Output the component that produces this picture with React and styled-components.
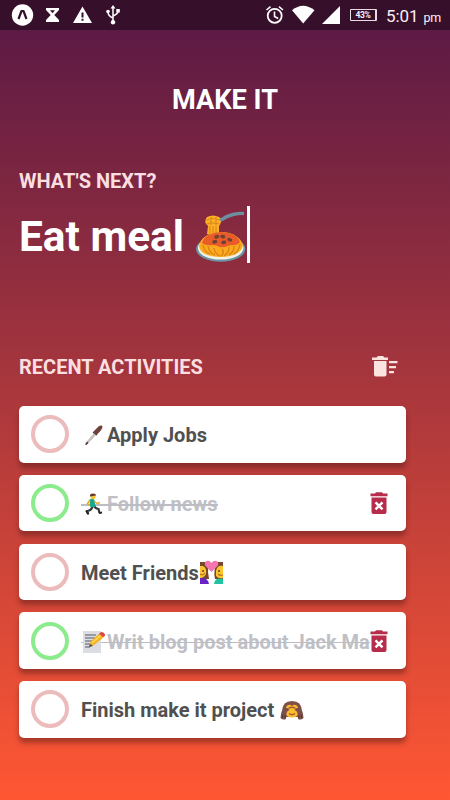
import React from "react";
import styled, { createGlobalStyle } from "styled-components";

const GlobalStyle = createGlobalStyle`
  * { box-sizing: border-box; }
  body { margin: 0; font-family: Roboto, "Liberation Sans", sans-serif; }
`;

const Screen = styled.div`
  width: 450px;
  height: 800px;
  overflow: hidden;
  display: flex;
  flex-direction: column;
  background: linear-gradient(180deg, #571845 0%, #ff5733 100%);
`;

const StatusBar = styled.header`
  display: flex;
  justify-content: space-between;
  height: 30px;
  flex: none;
  background: #360f2a;
`;

const StatusIcons = styled.svg`
  display: block;
  flex: none;
  height: 30px;
  width: ${(p) => p.$width}px;
`;

const StatusRight = styled.div`
  display: flex;
  align-items: center;
  width: 186px;
  color: #fbeff6;
`;

const Battery = styled.div`
  display: flex;
  flex: none;
  align-items: center;
  justify-content: center;
  width: 27px;
  height: 12px;
  margin-left: 10px;
  border: 1px solid #e9dce5;
  border-right-width: 2px;
  border-radius: 1px;
  font-size: 8.5px;
  font-weight: 700;
  line-height: 10px;
  letter-spacing: -0.3px;
`;

const Clock = styled.time`
  display: flex;
  align-items: baseline;
  gap: 5px;
  margin-left: 9px;
  padding-top: 3px;
  font-size: 17px;
  line-height: 20px;
  letter-spacing: -0.1px;
  white-space: nowrap;
`;

const Meridiem = styled.span`
  font-size: 12.5px;
`;

const Main = styled.main`
  display: flex;
  flex-direction: column;
  padding: 54px 44px 0 19px;
`;

const Title = styled.h1`
  margin: 0 -44px 0 -19px;
  text-align: center;
  color: #fff;
  font-size: 27.2px;
  line-height: 32px;
  font-weight: 700;
`;

const Label = styled.h2`
  margin: 0;
  color: #fbdfe0;
  font-size: 20px;
  line-height: 24px;
  font-weight: 700;
`;

const NextSection = styled.section`
  margin-top: 53px;
  height: 186px;
`;

const Entry = styled.div`
  display: flex;
  align-items: center;
  height: 57px;
  margin-top: 13px;
  color: #fff;
  font-size: 42.4px;
  line-height: 57px;
  font-weight: 700;
  white-space: nowrap;
`;

const EntryText = styled.span`
  width: 176px;
  padding-top: 4px;
`;

const Caret = styled.span`
  width: 3px;
  height: 57px;
  margin-left: -1px;
  background: #fff;
`;

const SectionHeader = styled.div`
  display: flex;
  align-items: center;
  justify-content: space-between;
  height: 24px;
  padding-right: 8px;
`;

const List = styled.ul`
  display: flex;
  flex-direction: column;
  gap: 12.3px;
  list-style: none;
  margin: 27px 0 0;
  padding: 0;
`;

const Card = styled.li`
  display: flex;
  align-items: center;
  height: 56.5px;
  padding: 0 16px 0 12px;
  background: #fff;
  border-radius: 5px;
  box-shadow: 0 5px 5px rgba(80, 25, 25, 0.45);
`;

const Ring = styled.span`
  flex: none;
  width: 38px;
  height: 38px;
  border: 4px solid ${(p) => (p.$done ? "#8ceb8c" : "#ecbbbc")};
  border-radius: 50%;
`;

const TaskText = styled.div`
  position: relative;
  display: flex;
  align-items: center;
  height: 28px;
  margin-left: 12px;
  color: ${(p) => (p.$done ? "#bfc0c6" : "#505050")};
  font-size: 20px;
  line-height: 28px;
  font-weight: 700;
  white-space: nowrap;
  padding-top: 2px;

  &::before {
    content: "";
    display: ${(p) => (p.$done ? "block" : "none")};
    position: absolute;
    left: 0;
    right: 0;
    top: 15px;
    height: 1.5px;
    background: #bcbdc3;
  }
`;

const Emoji = styled.svg`
  display: block;
  position: relative;
  flex: none;
  overflow: visible;
  width: ${(p) => p.$size}px;
  height: ${(p) => p.$size}px;
  margin-left: ${(p) => p.$before || 0}px;
`;

const RemoveButton = styled.button`
  display: flex;
  flex: none;
  margin: 0 0 0 auto;
  padding: 0;
  border: 0;
  background: none;
`;

const ClearButton = styled(RemoveButton)`
  margin: 0;
`;

const Glyph = styled.svg`
  display: block;
  width: ${(p) => p.$w}px;
  height: ${(p) => p.$h}px;
`;

const Spaghetti = () => (
  <Emoji $size={53} viewBox="0 0 53 53">
    <ellipse cx="25.7" cy="41" rx="24.7" ry="12.8" fill="#6b94a4" />
    <ellipse cx="25.7" cy="40" rx="22.8" ry="11.6" fill="#f3f0e6" />
    <path d="M4 38C5 30 14 24 26 24s20 6 22 13c-1 8-11 12-22 12S5 46 4 38Z" fill="#fbaa1e" />
    <path d="M8 37q1 7 7 9M13 38q1 7 7 9M19 40q1 6 6 8M27 41q3 4-1 7M34 39q0 6-5 9M39 38q0 6-5 9M45 36q-1 7-6 10" fill="none" stroke="#d98016" strokeWidth="1.3" />
    <path d="M12 9q6-3 12 0 3 2 2 5-1 3-2 4v8H12l1-8q-5-4-1-9Z" fill="#fbb026" />
    <path d="M12 12q6-3 12 0M12 16q6-2 12 0M15 18v8M18 18v8M21 18v8M16 9v8M21 9v8" fill="none" stroke="#dc8619" strokeWidth="1.1" />
    <path d="M7 35Q9 28 15 26.500 20 24 26 24q16 1 19 10-2 3-6 3-4 0-6 1-4 2-8 1-4-2-7-2-7 1-11-2Z" fill="#e95b28" />
    <path d="m21 29 1.500-.4M27 28.500l1.500.2M34 31.500l1.500.5M19 34l1.500-.4M28 34.500l1.500-.2" fill="none" stroke="#704035" strokeWidth="3.4" strokeLinecap="round" />
    <path d="M25 12.500Q31 8 38 6.500T49 5.500" fill="none" stroke="#6e8f9f" strokeWidth="3.4" />
  </Emoji>
);

const Knife = () => (
  <Emoji $size={26} viewBox="0 0 26 26">
    <path d="m4.500 21 9-10.500 2 2-9 9.500Z" fill="#c9bfbc" />
    <path d="m4 22.500 2-3 1.500 1.500-2 2Z" fill="#51413e" />
    <path d="m12.500 9.500 5-5q3-2 4 0 0 3-5.500 8Z" fill="#704139" />
    <path d="m12 10 4 3" stroke="#4d302e" strokeWidth="1.3" />
  </Emoji>
);

const Runner = () => (
  <Emoji $size={26} viewBox="0 0 26 26">
    <path d="M11.500 14q0 5-5 6l.5 3M12.500 14q2 4 5 4l1 4" fill="none" stroke="#35383c" strokeWidth="2.2" />
    <path d="m5 19.500 2.500 4m10.500-1.300 3-.7" stroke="#202226" strokeWidth="1.8" />
    <path d="M8.500 8.500q3-1.500 5 .5l1 6.500q-3 1-5.500 0Z" fill="#18a98d" />
    <path d="m9 9-2.500 3.500 2 2m5-4 2.500 2 3-1" fill="none" stroke="#e5ad27" strokeWidth="1.5" />
    <circle cx="12" cy="5.800" r="2.500" fill="#f6c52e" />
    <path d="M9 5.500Q8.500 2.500 12 2.500q3 0 3 2-3 .5-6 1Z" fill="#67372d" />
  </Emoji>
);

const Couple = () => (
  <Emoji $size={25} viewBox="0 0 25 25">
    <path d="M1 2h6q3 4 2 10l1 7H1ZM18 2h6v17h-8q-2-9 2-17Z" fill="#75472f" />
    <path d="M1 6h3q4 2 3 8-2 4-6 4ZM24 6q-6-1-7 5v5q3 3 7 2Z" fill="#fdc52d" />
    <path d="M1 18q8-1 9 6H1Z" fill="#6922c5" />
    <path d="M15 24q1-7 9-5v5Z" fill="#20c4a0" />
    <path d="m12.500 12-6-6q-2-4 1-5 3-1 5 2 2-3 5-2 3 2 1 5Z" fill="#f376af" />
    <path d="M4 10v2m16-2v2" stroke="#683c2d" strokeWidth="1.5" />
    <path d="M1 14q3 2 5-1m18 2q-3 1-5-1" fill="none" stroke="#c36c20" strokeWidth="1.2" />
  </Emoji>
);

const Memo = () => (
  <Emoji $size={26} viewBox="0 0 26 26">
    <path d="M2 2h18v22H2Z" fill="#dbdde2" />
    <path d="M4 6h11M4 9h10M4 12h8M4 15h6M4 18h5" stroke="#565b65" strokeWidth="1.2" />
    <path d="m8 18 2-6 9-8 4 4-10 8Z" fill="#f6b421" />
    <path d="m11 14 9-8" stroke="#ffda59" strokeWidth="1.5" />
    <path d="m18 5 2-2q4 0 4 4l-2 1Z" fill="#df463f" />
    <path d="m8 18 1-3 3 2Z" fill="#4b4545" />
  </Emoji>
);

const Monkey = () => (
  <Emoji $size={24} $before={6} viewBox="0 0 24 24">
    <path d="M2.500 13Q2 3 12 3t9.500 10l-2 6h-15Z" fill="#805046" />
    <ellipse cx="12" cy="14" rx="7" ry="5.500" fill="#f9bd2f" />
    <path d="M6 9q3-4 6-1 3-3 6 1l-1 7H7Z" fill="#f9bd2f" />
    <path d="M8.500 10.500q3.500-2.500 7 0M9 15.500q3 2.500 6 0" fill="none" stroke="#a85a30" strokeWidth="1.3" />
    <path d="M3 10q5-1 6.500 2-3 1-3 4l-.5 5q-3 1.500-5.500-1Q1 14 3 10ZM21 10q-5-1-6.500 2 3 1 3 4l.5 5q3 1.500 5.500-1Q23 14 21 10Z" fill="#7c5048" />
    <path d="m3 17-1 3m3-3v3m16-3 1 3m-3-3v3" stroke="#543732" />
  </Emoji>
);

const tasks = [
  { text: "Apply Jobs", before: <Knife /> },
  { text: "Follow news", before: <Runner />, done: true },
  { text: "Meet Friends", after: <Couple /> },
  { text: "Writ blog post about Jack Ma", before: <Memo />, done: true },
  { text: "Finish make it project", after: <Monkey /> },
];

function Task({ task }) {
  return (
    <Card>
      <Ring $done={task.done} />
      <TaskText $done={task.done}>
        {task.before}
        <span>{task.text}</span>
        {task.after}
      </TaskText>
      {task.done && (
        <RemoveButton aria-label="Delete activity">
          <Glyph $w={20} $h={24} viewBox="0 0 20 24">
            <path fill="#b62c4a" d="M.5 2.500H5L6 1.300h6l1 1.200h4.500v2.800H.5ZM1.500 6.500h15v14.500q0 2-2 2h-11q-2 0-2-2Z" />
            <path d="m5.500 11.300 7 7m0-7-7 7" stroke="#fff" strokeWidth="2.5" />
          </Glyph>
        </RemoveButton>
      )}
    </Card>
  );
}

export default function App() {
  return (
    <>
      <GlobalStyle />
      <Screen>
        <StatusBar>
          <StatusIcons $width={130} viewBox="0 0 130 30" fill="#fff">
            <circle cx="22.5" cy="15" r="10.7" />
            <path d="m18.500 19 3-8h2l3 8" fill="none" stroke="#360f2a" strokeWidth="2.2" strokeLinejoin="round" />
            <path d="M46 8h13v2l-4.700 5 4.700 5v2H46v-2l4.700-5-4.700-5Zm4 2.200 2.500 3 2.500-3Z" fillRule="evenodd" />
            <path d="M82.500 6.500 92 23H73Zm-1 6v5h2v-5Zm0 6.300v2h2v-2Z" fillRule="evenodd" />
            <path d="m113 5-2.500 3.500h5Z" />
            <path d="M113 7v14m0-3q-5-2-5-6m5 4q5-2 5-5" fill="none" stroke="#fff" strokeWidth="1.5" />
            <circle cx="113" cy="22.3" r="2.2" />
            <circle cx="108" cy="11.5" r="1.8" />
            <path d="M116.300 9h3.500v3.500h-3.500Z" />
          </StatusIcons>
          <StatusRight>
            <StatusIcons $width={76} viewBox="264 0 76 30" fill="#fff">
              <circle cx="274.7" cy="15.8" r="7" fill="none" stroke="#fff" strokeWidth="1.8" />
              <path d="M274.500 11.500v5l3.700 2M266.500 10l4-3.300m8.500 0 4 3.300" fill="none" stroke="#fff" strokeWidth="1.6" />
              <path d="M292 10.300q11-9 22.500 0L303.200 23.500Z" />
              <path d="M340 6v18h-18Z" />
            </StatusIcons>
            <Battery>43%</Battery>
            <Clock>
              5:01 <Meridiem>pm</Meridiem>
            </Clock>
          </StatusRight>
        </StatusBar>
        <Main>
          <Title>MAKE IT</Title>
          <NextSection>
            <Label>WHAT'S NEXT?</Label>
            <Entry>
              <EntryText>Eat meal</EntryText>
              <Spaghetti />
              <Caret />
            </Entry>
          </NextSection>
          <SectionHeader>
            <Label>RECENT ACTIVITIES</Label>
            <ClearButton aria-label="Clear completed">
              <Glyph $w={27} $h={24} viewBox="0 0 27 24" fill="#fbe3df">
                <path d="M1 2.500h4.500L7 1h5l1.500 1.500H17V5H1ZM3 6h12.500v13.500q0 2-2 2H5q-2 0-2-2ZM18 6h8.500v2.300H18Zm0 5h7v2.300h-7Zm0 5h5v2.300h-5Z" />
              </Glyph>
            </ClearButton>
          </SectionHeader>
          <List>
            {tasks.map((task) => (
              <Task key={task.text} task={task} />
            ))}
          </List>
        </Main>
      </Screen>
    </>
  );
}
